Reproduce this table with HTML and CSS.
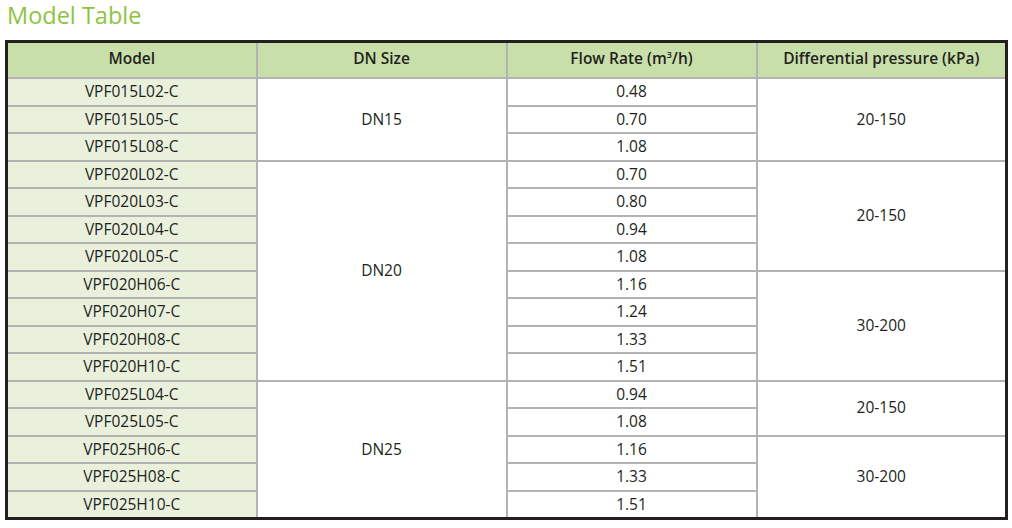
FILE: index.html
```html
<!DOCTYPE html>
<html>
<head>
<meta charset="utf-8">
<link rel="stylesheet" href="styles.css">
</head>
<body>
<h1 class="title">Model Table</h1>
<table class="models">
  <thead>
    <tr class="head">
      <th>Model</th>
      <th>DN Size</th>
      <th>Flow Rate (m<sup>3</sup>/h)</th>
      <th>Differential pressure (kPa)</th>
    </tr>
  </thead>
  <tbody>
    <tr><td class="model">VPF015L02-C</td><td rowspan="3">DN15</td><td>0.48</td><td rowspan="3">20-150</td></tr>
    <tr><td class="model">VPF015L05-C</td><td>0.70</td></tr>
    <tr><td class="model">VPF015L08-C</td><td>1.08</td></tr>
    <tr><td class="model">VPF020L02-C</td><td rowspan="8">DN20</td><td>0.70</td><td rowspan="4">20-150</td></tr>
    <tr><td class="model">VPF020L03-C</td><td>0.80</td></tr>
    <tr><td class="model">VPF020L04-C</td><td>0.94</td></tr>
    <tr><td class="model">VPF020L05-C</td><td>1.08</td></tr>
    <tr><td class="model">VPF020H06-C</td><td>1.16</td><td rowspan="4">30-200</td></tr>
    <tr><td class="model">VPF020H07-C</td><td>1.24</td></tr>
    <tr><td class="model">VPF020H08-C</td><td>1.33</td></tr>
    <tr><td class="model">VPF020H10-C</td><td>1.51</td></tr>
    <tr><td class="model">VPF025L04-C</td><td rowspan="5">DN25</td><td>0.94</td><td rowspan="2">20-150</td></tr>
    <tr><td class="model">VPF025L05-C</td><td>1.08</td></tr>
    <tr><td class="model">VPF025H06-C</td><td>1.16</td><td rowspan="3">30-200</td></tr>
    <tr><td class="model">VPF025H08-C</td><td>1.33</td></tr>
    <tr><td class="model">VPF025H10-C</td><td>1.51</td></tr>
  </tbody>
</table>
</body>
</html>
```

FILE: styles.css
```css
html, body {
  margin: 0;
  padding: 0;
  background: #ffffff;
}
body {
  font-family: "Open Sans", "Noto Sans", sans-serif;
  color: #231f20;
  padding: 0 4px 0 5px;
}
.title {
  margin: 0;
  height: 40px;
  line-height: 31px;
  font-size: 23.5px;
  font-weight: 400;
  color: #8cc43f;
  padding-left: 2px;
}
.models {
  width: 1003px;
  border-collapse: collapse;
  border: 3px solid #231f20;
  table-layout: fixed;
}
.models th,
.models td {
  border: 2px solid #b3b3b3;
  text-align: center;
  padding: 0;
  font-size: 15.5px;
  line-height: 1;
}
.models th {
  height: 32px;
  background: #c9dfa9;
  font-weight: 600;
  font-size: 15.5px;
  padding-bottom: 2px;
}
.models td {
  height: 25.5px;
}
.models td.model {
  background: #e9f1dd;
}
.models sup {
  font-size: 9px;
  vertical-align: 6px;
  line-height: 0;
}
```
